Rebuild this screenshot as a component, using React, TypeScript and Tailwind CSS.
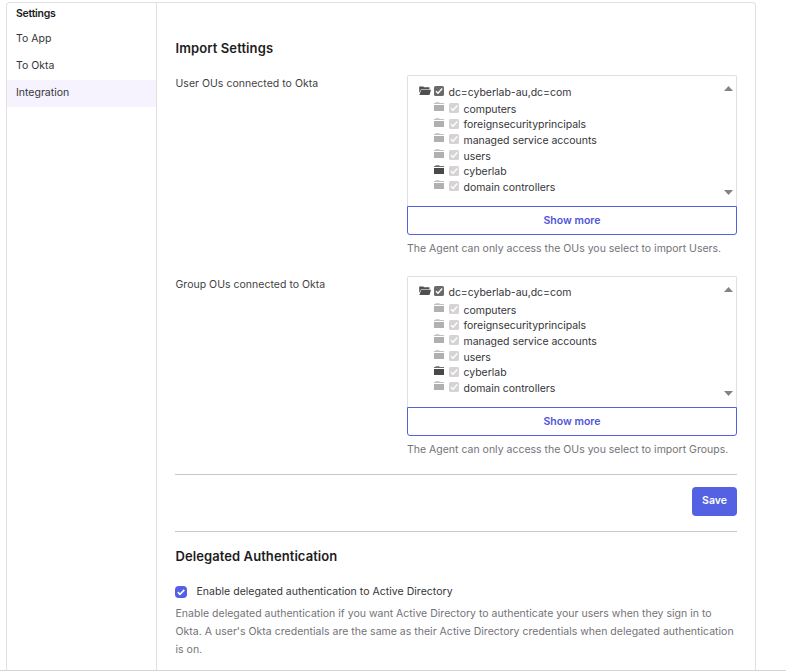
const organizationalUnits = [
  { name: "computers", active: false },
  { name: "foreignsecurityprincipals", active: false },
  { name: "managed service accounts", active: false },
  { name: "users", active: false },
  { name: "cyberlab", active: true },
  { name: "domain controllers", active: false },
];

function FolderOpen() {
  return (
    <svg className="h-[10px] w-[12px] shrink-0" viewBox="0 0 12 10" fill="#505050">
      <path d="M0.2 0.4H4.3L5 1.2H10.5V3.2H2L0.2 7Z" />
      <path d="M2.2 3.8H12L10.5 8.9H0.4Z" />
    </svg>
  );
}

function Folder({ active }: { active: boolean }) {
  return (
    <svg className="h-[10px] w-[10px] shrink-0" viewBox="0 0 10 10" fill={active ? "#484848" : "#b0afb1"}>
      <path d="M0 1H1.5V0.3H5.5V1H10V2H0Z" opacity=".8" />
      <path d="M0 3H10V9H0Z" />
    </svg>
  );
}

function CheckBox({ disabled }: { disabled: boolean }) {
  return (
    <svg className="h-[10px] w-[10px] shrink-0" viewBox="0 0 10 10">
      <rect width="10" height="10" rx="1.6" fill={disabled ? "#d5d3d6" : "#6b696c"} />
      <path d="M2 5.2L4 7.3L8.2 2.5" fill="none" stroke="white" strokeWidth="1.4" />
    </svg>
  );
}

function OuField({ label, hint, rootClass }: { label: string; hint: string; rootClass: string }) {
  return (
    <div className="flex h-[201px] justify-between">
      <div className="pl-[0.5px] pt-px leading-[16px] tracking-[0.02px] text-[#3f3f44]">{label}</div>
      <div className="w-[330px]">
        <div className="flex h-[131px] justify-between rounded-t-[2px] border border-b-0 border-[#e1dfe2]">
          <div className={`pl-[11px] tracking-[-0.03px] text-[#35353a] ${rootClass}`}>
            <div className="flex h-[16px] items-center">
              <div className="-mt-[2px] flex"><FolderOpen /></div>
              <div className="-mt-[2px] ml-[3px] flex"><CheckBox disabled={false} /></div>
              <span className="ml-[4.5px] pt-[1.4px] whitespace-nowrap">dc=cyberlab-au,dc=com</span>
            </div>
            <div className="pl-[15px]">
              {organizationalUnits.map((ou) => (
                <div key={ou.name} className="flex h-[15.6px] items-center">
                  <div className="-mt-[4px] flex"><Folder active={ou.active} /></div>
                  <div className="-mt-[2px] ml-[5px] flex"><CheckBox disabled /></div>
                  <span className="ml-[4.5px] pt-[1.1px] whitespace-nowrap">{ou.name}</span>
                </div>
              ))}
            </div>
          </div>
          <div className="flex flex-col justify-between pb-[11px] pr-[3px] pt-[10px]">
            <svg className="h-[5px] w-[9px]" viewBox="0 0 9 5" fill="#858386"><path d="M0 5L4.5 0L9 5Z" /></svg>
            <svg className="h-[5px] w-[9px]" viewBox="0 0 9 5" fill="#858386"><path d="M0 0H9L4.5 5Z" /></svg>
          </div>
        </div>
        <button className="flex h-[29px] w-full items-center justify-center rounded-b-[3px] border border-[#5361df] pt-px font-semibold text-[#5055d8]">
          Show more
        </button>
        <p className="pt-[6px] leading-[16px] whitespace-nowrap text-[#737378]">{hint}</p>
      </div>
    </div>
  );
}

export default function App() {
  return (
    <div className="flex h-[671px] w-[786px] flex-col overflow-hidden border-b border-[#d5d5d7] bg-white pl-[6px] pt-[2px] font-['Inter','Liberation_Sans',sans-serif] text-[10.5px]">
      <div className="flex w-[750px] grow rounded-t-[4px] border border-b-0 border-[#e1dfe2]">
        <nav className="w-[150px] shrink-0 border-r border-[#e1dfe2] text-[#35353a]">
          <h2 className="h-[23px] pl-[9px] pt-[3px] leading-[16px] font-semibold tracking-[-0.25px] text-[#1d1d21]">Settings</h2>
          <a className="flex h-[27px] items-center pb-[2px] pl-[9px]">To App</a>
          <a className="flex h-[27px] items-center pb-[2px] pl-[9px]">To Okta</a>
          <a className="flex h-[27px] items-center pb-[2px] pl-[9px] bg-[#f6f3fe]">Integration</a>
        </nav>
        <main className="w-[580px] shrink-0 pl-[18px] pt-[35px]">
          <h1 className="h-[37px] pl-[0.5px] text-[13px] leading-[20px] font-semibold tracking-[0.1px] text-[#1d1d21]">Import Settings</h1>
          <OuField
            label="User OUs connected to Okta"
            hint="The Agent can only access the OUs you select to import Users."
            rootClass="pt-[8px] [&>div:last-child]:pt-[1.4px]"
          />
          <OuField
            label="Group OUs connected to Okta"
            hint="The Agent can only access the OUs you select to import Groups."
            rootClass="pt-[7px] [&>div:last-child]:pt-[2.4px]"
          />
          <div className="-mt-[3px] flex h-[58px] items-start justify-end border-y border-[#c8c7c9] pt-[12px]">
            <button className="h-[29px] w-[45px] rounded-[4px] bg-[#5361e2] pb-[2px] font-semibold text-white">Save</button>
          </div>
          <h1 className="pl-[0.5px] pt-[14px] text-[13px] leading-[20px] font-semibold tracking-[0.08px] text-[#1d1d21]">Delegated Authentication</h1>
          <label className="mt-[17px] flex h-[16px] items-center tracking-[0.03px] text-[#35353a]">
            <svg className="mt-px h-[12px] w-[12px]" viewBox="0 0 12 12">
              <rect width="12" height="12" rx="3.8" fill="#5361e2" />
              <path d="M2.8 6.1L5 8.3L9.3 3.9" fill="none" stroke="white" strokeWidth="1.6" />
            </svg>
            <span className="ml-[9.5px] pt-[1.5px]">Enable delegated authentication to Active Directory</span>
          </label>
          <p className="pl-[0.5px] pt-[6px] leading-[18px] tracking-[0.015px] whitespace-nowrap text-[#737378]">
            Enable delegated authentication if you want Active Directory to authenticate your users when they sign in to
            <br />
            Okta. A user's Okta credentials are the same as their Active Directory credentials when delegated authentication
            <br />
            is on.
          </p>
        </main>
      </div>
    </div>
  );
}
